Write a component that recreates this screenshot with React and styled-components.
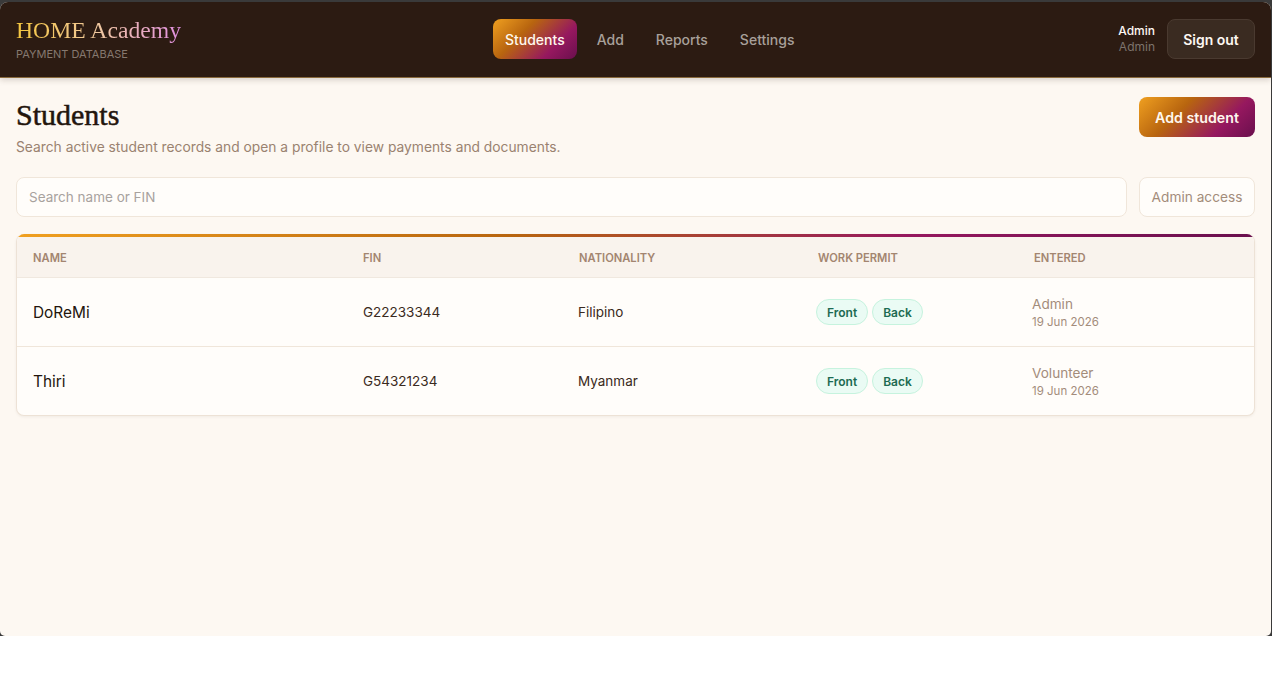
import React from 'react';
import styled, { createGlobalStyle } from 'styled-components';

const GlobalStyle = createGlobalStyle`
  html, body {
    margin: 0;
    background: #ffffff;
  }
  * {
    box-sizing: border-box;
  }
`;

const sans = `Inter, "Noto Sans", "Liberation Sans", sans-serif`;
const serif = `"Liberation Serif", "DejaVu Serif", serif`;
const brandGradient = 'linear-gradient(135deg, #f0a020 0%, #b8650f 35%, #96185f 72%, #6a0f4e 100%)';

const Frame = styled.div`
  width: 1272px;
  height: 636px;
  padding: 2px 1px 0 0;
  background: #3a3a3a;
  font-family: ${sans};
`;

const Window = styled.div`
  height: 634px;
  display: flex;
  flex-direction: column;
  background: #fdf8f2;
  border-radius: 8px 8px 5px 5px;
  overflow: hidden;
`;

const Header = styled.header`
  height: 76px;
  flex: none;
  display: flex;
  align-items: center;
  justify-content: space-between;
  padding: 0 16px 1px;
  background: #2c1b12;
  border-bottom: 1px solid #8a6a3c;
  box-shadow: 0 2px 6px rgba(44, 27, 18, 0.18);
`;

const Brand = styled.div`
  display: flex;
  flex-direction: column;
  gap: 3px;
  padding-bottom: 2px;
`;

const Logo = styled.span`
  font-family: ${serif};
  font-size: 23.7px;
  line-height: 28px;
  background: linear-gradient(90deg, #f4c63e 0%, #f0c8a0 50%, #e08fe0 100%);
  -webkit-background-clip: text;
  background-clip: text;
  color: transparent;
`;

const Tagline = styled.span`
  font-size: 11px;
  line-height: 14px;
  color: #85786f;
`;

const Nav = styled.nav`
  display: flex;
  gap: 8px;
`;

const NavItem = styled.a`
  height: 40px;
  display: flex;
  align-items: center;
  padding: 0 12px;
  border-radius: 8px;
  font-size: 14px;
  font-weight: 500;
  color: ${(p) => (p.$active ? '#fff8ee' : '#a8a09a')};
  background: ${(p) => (p.$active ? brandGradient : 'transparent')};
`;

const Account = styled.div`
  display: flex;
  align-items: center;
  gap: 12px;
`;

const Who = styled.div`
  display: flex;
  flex-direction: column;
  align-items: flex-end;
  font-size: 12px;
  line-height: 16px;
  color: #fdf8f2;
  font-weight: 500;
  span {
    color: #7d736c;
    font-weight: 400;
  }
`;

const SignOut = styled.button`
  width: 88px;
  height: 40px;
  padding: 0;
  border: 1px solid #4a3a30;
  border-radius: 8px;
  background: #3a2b21;
  color: #fdf8f2;
  font-family: ${sans};
  font-size: 14px;
  font-weight: 600;
`;

const Main = styled.main`
  padding: 19px 16px 0;
`;

const TitleRow = styled.div`
  display: flex;
  justify-content: space-between;
  align-items: flex-start;
`;

const Title = styled.h1`
  margin: 0;
  font-family: ${serif};
  font-size: 30px;
  font-weight: 400;
  -webkit-text-stroke: 0.5px #23150d;
  line-height: 36px;
  color: #23150d;
`;

const Subtitle = styled.p`
  margin: 4px 0 0;
  font-size: 13.8px;
  line-height: 20px;
  color: #9a8270;
`;

const AddButton = styled.button`
  width: 116px;
  height: 40px;
  padding: 0;
  border: 0;
  border-radius: 8px;
  background: ${brandGradient};
  color: #fff8ee;
  font-family: ${sans};
  font-size: 14.2px;
  font-weight: 600;
`;

const SearchRow = styled.div`
  display: flex;
  gap: 12px;
  margin-top: 20px;
`;

const SearchInput = styled.input`
  flex: 1;
  height: 40px;
  padding: 0 12px;
  border: 1px solid #f0e6da;
  border-radius: 8px;
  background: #fffdfa;
  font-family: ${sans};
  font-size: 13.5px;
  color: #23150d;
  outline: none;
  &::placeholder {
    color: #a8a29e;
  }
`;

const AccessBadge = styled.div`
  width: 116px;
  height: 40px;
  display: flex;
  align-items: center;
  justify-content: center;
  border: 1px solid #f0e6da;
  border-radius: 8px;
  background: #fffdfa;
  font-size: 13.7px;
  color: #a38c7a;
`;

const Card = styled.section`
  position: relative;
  margin-top: 17px;
  padding-top: 3px;
  border: 1px solid #ede2d6;
  border-top: 0;
  border-radius: 8px;
  background: #fffdfa;
  box-shadow: 0 1px 3px rgba(44, 27, 18, 0.06);
  overflow: hidden;
  &::before {
    content: '';
    position: absolute;
    inset: 0 -1px auto;
    height: 3px;
    background: linear-gradient(90deg, #f0a020 0%, #b8650f 40%, #96185f 72%, #6a0f4e 100%);
  }
`;

const HeadRow = styled.div`
  height: 41px;
  display: grid;
  grid-template-columns: 330px 216px 239px 216px 1fr;
  align-items: center;
  padding: 1px 0 0 16px;
  background: #f9f3ed;
  border-bottom: 1px solid #f0e8df;
`;

const HeadCell = styled.div`
  font-size: 11.2px;
  font-weight: 600;
  color: #a38570;
`;

const Row = styled.div`
  height: 69px;
  display: grid;
  grid-template-columns: 330px 215px 238px 216px 1fr;
  align-items: center;
  padding-left: 16px;
  border-bottom: 1px solid #f0e6da;
  &:last-child {
    height: 68px;
    border-bottom: 0;
  }
`;

const Name = styled.div`
  font-size: 15.4px;
  font-weight: 400;
  color: #23150d;
`;

const Cell = styled.div`
  font-size: 13.5px;
  color: #3a2a20;
`;

const Chips = styled.div`
  display: flex;
  gap: 4px;
`;

const Chip = styled.span`
  height: 26px;
  display: flex;
  align-items: center;
  padding: 0 10px;
  border: 1px solid #c6f3de;
  border-radius: 13px;
  background: #eafbf4;
  font-size: 12px;
  font-weight: 600;
  color: #1d6b52;
`;

const Entered = styled.div`
  display: flex;
  flex-direction: column;
  padding-top: 2px;
  font-size: 13.6px;
  line-height: 18px;
  color: #a38c7a;
  small {
    font-size: 11.5px;
    line-height: 18px;
  }
`;

const students = [
  { name: 'DoReMi', fin: 'G22233344', nationality: 'Filipino', by: 'Admin', date: '19 Jun 2026' },
  { name: 'Thiri', fin: 'G54321234', nationality: 'Myanmar', by: 'Volunteer', date: '19 Jun 2026' }
];

const columns = ['NAME', 'FIN', 'NATIONALITY', 'WORK PERMIT', 'ENTERED'];

const App = () => (
  <>
    <GlobalStyle />
    <Frame>
      <Window>
        <Header>
          <Brand>
            <Logo>HOME Academy</Logo>
            <Tagline>PAYMENT DATABASE</Tagline>
          </Brand>
          <Nav>
            <NavItem $active>Students</NavItem>
            <NavItem>Add</NavItem>
            <NavItem>Reports</NavItem>
            <NavItem>Settings</NavItem>
          </Nav>
          <Account>
            <Who>
              Admin
              <span>Admin</span>
            </Who>
            <SignOut>Sign out</SignOut>
          </Account>
        </Header>
        <Main>
          <TitleRow>
            <div>
              <Title>Students</Title>
              <Subtitle>Search active student records and open a profile to view payments and documents.</Subtitle>
            </div>
            <AddButton>Add student</AddButton>
          </TitleRow>
          <SearchRow>
            <SearchInput placeholder="Search name or FIN" />
            <AccessBadge>Admin access</AccessBadge>
          </SearchRow>
          <Card>
            <HeadRow>
              {columns.map((c) => (
                <HeadCell key={c}>{c}</HeadCell>
              ))}
            </HeadRow>
            {students.map((s) => (
              <Row key={s.name}>
                <Name>{s.name}</Name>
                <Cell>{s.fin}</Cell>
                <Cell>{s.nationality}</Cell>
                <Chips>
                  <Chip>Front</Chip>
                  <Chip>Back</Chip>
                </Chips>
                <Entered>
                  {s.by}
                  <small>{s.date}</small>
                </Entered>
              </Row>
            ))}
          </Card>
        </Main>
      </Window>
    </Frame>
  </>
);

export default App;
